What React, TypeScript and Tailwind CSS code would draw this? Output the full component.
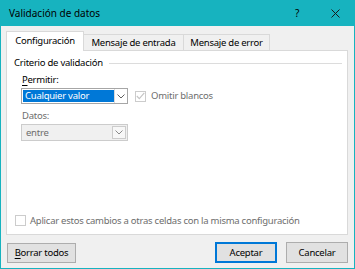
import React from "react";

const font = { fontFamily: '"Noto Sans", "Segoe UI", sans-serif' };

function Chevron({ color = "#606060" }: { color?: string }) {
  return (
    <svg width="8" height="5" viewBox="0 0 8 5">
      <path d="M0.5 0.5 L4 4 L7.5 0.5" fill="none" stroke={color} strokeWidth="1" />
    </svg>
  );
}

function Check() {
  return (
    <svg width="9" height="8" viewBox="0 0 9 8">
      <path d="M0.8 4 L3.3 6.6 L8.3 0.8" fill="none" stroke="#c4c4c4" strokeWidth="1.1" />
    </svg>
  );
}

export default function App() {
  return (
    <div
      className="w-[355px] h-[269px] bg-[#17b3bf] px-[1px] pb-[1px] flex flex-col text-[9.5px] tracking-[-0.25px] text-black leading-none whitespace-nowrap"
      style={font}
    >
      <div className="h-[26px] flex items-center pl-[8px] shrink-0">
        <span className="text-[10px] tracking-normal flex-1">Validación de datos</span>
        <span className="text-[10px] w-[10px] mr-[29px] text-center">?</span>
        <svg width="9" height="9" viewBox="0 0 9 9" className="mr-[14px]">
          <path d="M0.5 0.5 L8.5 8.5 M8.5 0.5 L0.5 8.5" stroke="#1a1a1a" strokeWidth="1" />
        </svg>
      </div>
      <div className="flex-1 bg-[#f0f0f0] flex flex-col pl-[5px] pr-[6px]">
        <div className="h-[24px] flex items-end relative z-10">
          <div className="h-[20px] w-[78px] bg-white border border-b-0 border-[#d9d9d9] flex items-center justify-center mb-[-1px] pb-[1px]">
            Configuración
          </div>
          <div className="h-[16px] w-[100px] bg-[#f0f0f0] border border-l-0 border-b-0 border-[#d9d9d9] flex items-center justify-center">
            Mensaje de entrada
          </div>
          <div className="h-[16px] w-[86px] bg-[#f0f0f0] border border-l-0 border-b-0 border-[#d9d9d9] flex items-center justify-center">
            Mensaje de error
          </div>
        </div>
        <div className="h-[185px] bg-white border border-[#d9d9d9] flex flex-col pl-[7px] pr-[5px]">
          <div className="flex items-center mt-[6px] h-[12px]">
            <span className="mr-[6px]">Criterio de validación</span>
            <div className="flex-1 h-[1px] bg-[#dcdcdc]" />
          </div>
          <div className="pl-[7px] mt-[5px]">
            <div className="h-[12px] flex items-center pl-[1px]">
              <span className="underline underline-offset-2">P</span>ermitir:
            </div>
            <div className="flex items-center mt-[2px]">
              <div className="w-[107px] h-[16px] border border-[#a6a6a6] bg-white flex items-center pl-[1px]">
                <div className="w-[91px] h-[12px] bg-[#0078d7] text-white flex items-center pl-[2px]">
                  Cualquier valor
                </div>
                <div className="flex-1 h-full flex items-center justify-center border-l border-[#dadada]">
                  <Chevron />
                </div>
              </div>
              <div className="ml-[7px] w-[11px] h-[11px] border border-[#cccccc] bg-white flex items-center justify-center">
                <Check />
              </div>
              <span className="ml-[5px] text-[#6d6d6d]">Omitir blancos</span>
            </div>
            <div className="h-[12px] flex items-center mt-[6px] text-[#6d6d6d] pl-[1px]">Datos:</div>
            <div className="w-[107px] h-[17px] border border-[#cccccc] bg-[#f0f0f0] flex items-center pl-[4px] mt-[2px] pr-[1px]">
              <span className="flex-1 text-[#6d6d6d]">entre</span>
              <div className="w-[14px] h-[13px] border border-[#cccccc] bg-[#f7f7f7] flex items-center justify-center">
                <Chevron color="#8a8a8a" />
              </div>
            </div>
          </div>
          <div className="flex-1" />
          <div className="flex items-center mb-[8px] pl-[1px]">
            <div className="w-[11px] h-[11px] border border-[#cccccc] bg-white" />
            <span className="ml-[4px] text-[#6d6d6d]">
              Aplicar estos cambios a otras celdas con la misma configuración
            </span>
          </div>
        </div>
        <div className="flex items-center mt-[7px]">
          <div className="w-[69px] h-[20px] border border-[#adadad] bg-[#e1e1e1] flex items-center justify-center ml-[1px]">
            <span className="underline underline-offset-2">B</span>orrar todos
          </div>
          <div className="flex-1" />
          <div className="w-[62px] h-[21px] border-2 border-[#0078d7] bg-[#e1e1e1] flex items-center justify-center">
            Aceptar
          </div>
          <div className="w-[62px] h-[21px] border border-[#adadad] bg-[#e1e1e1] flex items-center justify-center ml-[9px]">
            Cancelar
          </div>
        </div>
      </div>
    </div>
  );
}
